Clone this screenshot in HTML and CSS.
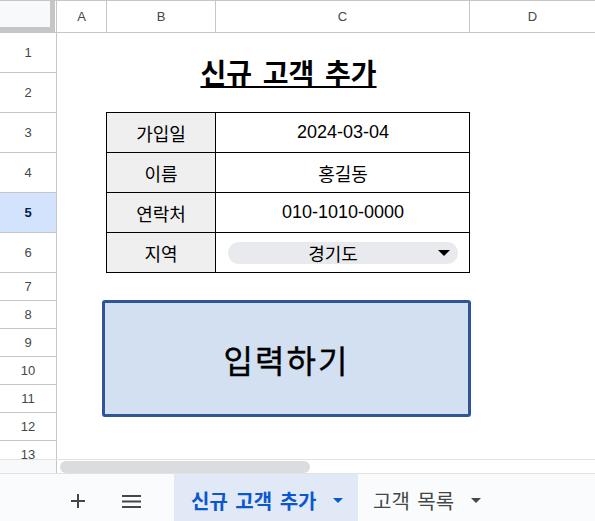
FILE: index.html
```html
<!DOCTYPE html>
<html lang="ko">
<head>
<meta charset="utf-8">
<title>신규 고객 추가</title>
<link rel="stylesheet" href="styles.css">
</head>
<body>
<div class="app">
  <div class="colhead">
    <div class="corner"><div class="corner-fill"></div></div>
    <div class="ch ch-a">A</div>
    <div class="ch ch-b">B</div>
    <div class="ch ch-c">C</div>
    <div class="ch ch-d">D</div>
  </div>
  <div class="body">
    <div class="rowhead">
      <div class="rh tall">1</div>
      <div class="rh tall">2</div>
      <div class="rh tall">3</div>
      <div class="rh tall">4</div>
      <div class="rh tall sel">5</div>
      <div class="rh tall">6</div>
      <div class="rh">7</div>
      <div class="rh">8</div>
      <div class="rh">9</div>
      <div class="rh">10</div>
      <div class="rh">11</div>
      <div class="rh">12</div>
      <div class="rh">13</div>
    </div>
    <div class="sheet">
      <div class="title"><span>신규 고객 추가</span></div>
      <div class="form">
        <div class="lbl">가입일</div><div class="val">2024-03-04</div>
        <div class="lbl">이름</div><div class="val">홍길동</div>
        <div class="lbl">연락처</div><div class="val">010-1010-0000</div>
        <div class="lbl">지역</div>
        <div class="val">
          <div class="chip"><span class="chip-text">경기도</span>
            <svg class="chip-arrow" width="12" height="6" viewBox="0 0 12 6"><polygon points="0,0 12,0 6,6" fill="#000"/></svg>
          </div>
        </div>
      </div>
      <div class="btn">입력하기</div>
    </div>
  </div>
  <div class="hscroll">
    <div class="hs-left"></div>
    <div class="hs-track"><div class="thumb"></div></div>
  </div>
  <div class="tabbar">
    <div class="icon-btn plus">
      <svg width="14" height="14" viewBox="0 0 14 14"><path d="M7 0V14M0 7H14" stroke="#444746" stroke-width="2"/></svg>
    </div>
    <div class="icon-btn menu">
      <svg width="19" height="13" viewBox="0 0 19 13"><rect x="0" y="0" width="19" height="2" fill="#444746"/><rect x="0" y="5.5" width="19" height="2" fill="#444746"/><rect x="0" y="11" width="19" height="2" fill="#444746"/></svg>
    </div>
    <div class="tab active"><span>신규 고객 추가</span>
      <svg width="10" height="5" viewBox="0 0 10 5"><polygon points="0,0 10,0 5,5" fill="#0b57d0"/></svg>
    </div>
    <div class="tab"><span>고객 목록</span>
      <svg width="10" height="5" viewBox="0 0 10 5"><polygon points="0,0 10,0 5,5" fill="#444746"/></svg>
    </div>
  </div>
</div>
</body>
</html>
```

FILE: styles.css
```css
* { box-sizing: border-box; }
html, body { margin: 0; padding: 0; background: #fff; }
.app {
  width: 595px;
  height: 521px;
  overflow: hidden;
  font-family: "Liberation Sans", "Noto Sans CJK KR", sans-serif;
  color: #000;
  display: flex;
  flex-direction: column;
}
.colhead {
  display: flex;
  height: 33px;
  flex: none;
  border-top: 1px solid #c4c7c5;
  border-bottom: 1px solid #c4c7c5;
}
.corner {
  width: 57px;
  flex: none;
  border-right: 1px solid #c4c7c5;
}
.corner-fill {
  width: 55px;
  height: 31px;
  background: #f8f9fa;
  border-right: 5px solid #c4c7c5;
  border-bottom: 5px solid #c4c7c5;
}
.ch {
  flex: none;
  display: flex;
  align-items: center;
  justify-content: center;
  font-size: 13px;
  color: #444746;
  border-right: 1px solid #c4c7c5;
}
.ch-a { width: 50px; }
.ch-b { width: 109px; }
.ch-c { width: 254px; }
.ch-d { flex: 1; border-right: none; }

.body {
  display: flex;
  height: 426px;
  flex: none;
  overflow: hidden;
}
.rowhead {
  width: 57px;
  flex: none;
  border-right: 1px solid #c4c7c5;
}
.rh {
  height: 28px;
  border-bottom: 1px solid #c4c7c5;
  display: flex;
  align-items: center;
  justify-content: center;
  font-size: 13px;
  color: #444746;
}
.rh.tall { height: 40px; }
.rh.sel {
  background: #d3e3fd;
  color: #041e49;
  font-weight: bold;
}
.sheet {
  flex: 1;
  display: grid;
  grid-template-columns: 50px 109px 254px 1fr;
  grid-template-rows: repeat(6, 40px) repeat(7, 28px);
}
.title {
  grid-column: 2 / 4;
  grid-row: 1 / 3;
  display: flex;
  align-items: center;
  justify-content: center;
  padding-bottom: 3px;
}
.title span {
  font-size: 28px;
  font-weight: bold;
  word-spacing: 3px;
  text-decoration: underline;
  text-decoration-thickness: 2px;
  text-underline-offset: 2px;
}
.form {
  grid-column: 2 / 4;
  grid-row: 3 / 7;
  margin: -1px 0 0 -1px;
  display: grid;
  grid-template-columns: 109px 254px;
  grid-template-rows: repeat(4, 40px);
  border-left: 1px solid #000;
  border-top: 1px solid #000;
  font-size: 18px;
}
.lbl, .val {
  border-right: 1px solid #000;
  border-bottom: 1px solid #000;
  display: flex;
  align-items: center;
  justify-content: center;
}
.lbl { background: #efefef; }
.val { padding: 0 11px 0 12px; }
.chip {
  width: 100%;
  height: 22px;
  margin-top: 1px;
  border-radius: 11px;
  background: #e8eaed;
  display: flex;
  align-items: center;
  padding-right: 8px;
}
.chip-text { flex: 1; text-align: center; }
.chip-arrow { flex: none; }
.btn {
  grid-column: 2 / 5;
  grid-row: 8 / 13;
  align-self: start;
  justify-self: start;
  margin: -1px 0 0 -5px;
  width: 369px;
  height: 117px;
  border: 3px solid #2f5597;
  border-radius: 3px;
  background: #d2e0f2;
  display: flex;
  align-items: center;
  justify-content: center;
  font-size: 32px;
  font-weight: normal;
  letter-spacing: 2px;
  -webkit-text-stroke: 0.4px #000;
}
.hscroll {
  display: flex;
  height: 15px;
  flex: none;
  border-top: 1px solid #e1e3e1;
  border-bottom: 1px solid #e1e3e1;
}
.hs-left {
  width: 57px;
  flex: none;
  background: #f8f9fa;
  border-right: 1px solid #c4c7c5;
}
.hs-track {
  flex: 1;
  padding: 1px 0 0 3px;
}
.thumb {
  width: 250px;
  height: 12px;
  border-radius: 6px;
  background: #dadce0;
}
.tabbar {
  flex: 1;
  background: #f9fbfd;
  display: flex;
  align-items: stretch;
}
.icon-btn {
  width: 40px;
  display: flex;
  align-items: center;
  justify-content: center;
  padding-top: 7px;
}
.plus { margin-left: 58px; }
.menu { margin-left: 13px; }
.tab {
  display: flex;
  align-items: center;
  font-size: 20px;
  word-spacing: 2px;
  color: #444746;
  padding: 5px 0 0 15px;
}
.tab span { margin-right: 17px; }
.tab.active {
  margin-left: 23px;
  width: 184px;
  padding-left: 17px;
  background: #e1e9f7;
  color: #0b57d0;
  font-weight: bold;
}
.tab.active span { margin-right: 16px; }
```
